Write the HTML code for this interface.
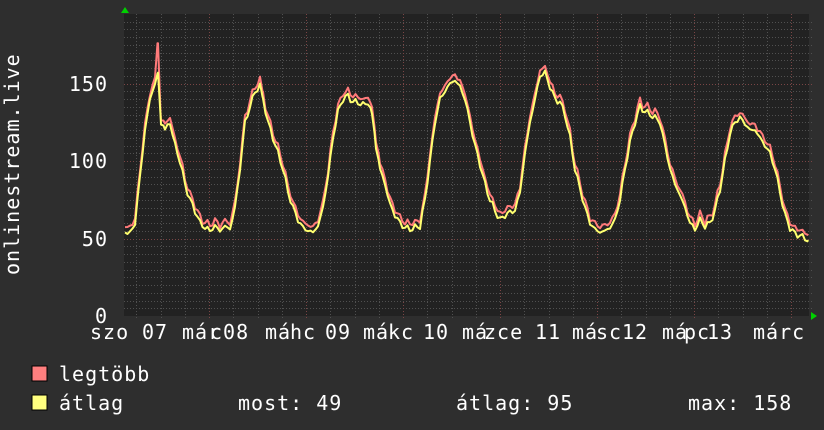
<!DOCTYPE html>
<html><head><meta charset="utf-8"><style>
html,body{margin:0;padding:0;background:#2e2e2e;width:824px;height:430px;overflow:hidden}
svg{display:block}
text{font-family:"DejaVu Sans Mono","Liberation Mono",monospace;fill:#fff;font-size:20px;letter-spacing:1px}
</style></head><body>
<svg id="s" width="824" height="430" xmlns="http://www.w3.org/2000/svg">
<rect x="0" y="0" width="824" height="430" fill="#2e2e2e"/>
<rect x="124" y="14" width="685" height="302" fill="#222"/>
<g id="grid"></g>
<polyline id="red" fill="none" stroke="#ff7a7a" stroke-width="2" stroke-linejoin="round"/>
<polyline id="yel" fill="none" stroke="#ffff70" stroke-width="2" stroke-linejoin="round"/>
<polygon points="121,13 125,7 129,13" fill="#00d000"/>
<polygon points="811,312 817,316 811,320" fill="#00d000"/>
<g text-anchor="end">
<text x="108" y="323">0</text>
<text x="108" y="246">50</text>
<text x="108" y="168">100</text>
<text x="108" y="91">150</text>
</g>
<text transform="translate(19,275) rotate(-90)">onlinestream.live</text>
<g>
<text x="90" y="339">szo</text>
<text x="142" y="339">07</text>
<text x="182" y="339">már</text>
<text x="210" y="339">c08</text>
<text x="265" y="339">má</text><text x="290" y="339">hc</text>
<text x="325" y="339">09</text>
<text x="363" y="339">má</text><text x="388" y="339">kc</text>
<text x="423" y="339">10</text>
<text x="462" y="339">má</text><text x="484" y="339">zce</text>
<text x="535" y="339">11</text>
<text x="572" y="339">má</text><text x="596" y="339">sc</text>
<text x="622" y="339">12</text>
<text x="662" y="339">má</text><text x="684" y="339">pc</text>
<text x="707" y="339">13</text>
<text x="753" y="339">márc</text>
</g>
<rect x="32" y="366" width="15" height="15" fill="#ff7f7f" stroke="#000" stroke-width="1"/>
<rect x="32" y="395" width="15" height="15" fill="#ffff7f" stroke="#000" stroke-width="1"/>
<text x="59" y="381">legtöbb</text>
<text x="59" y="410">átlag</text>
<text x="238" y="410">most: 49</text>
<text x="456" y="410">átlag: 95</text>
<text x="688" y="410">max: 158</text>
</svg>
<script>
var ns="http://www.w3.org/2000/svg",g=document.getElementById("grid");
function ln(x1,y1,x2,y2,c){var l=document.createElementNS(ns,"line");l.setAttribute("x1",x1);l.setAttribute("y1",y1);l.setAttribute("x2",x2);l.setAttribute("y2",y2);l.setAttribute("stroke",c);l.setAttribute("stroke-width","1");l.setAttribute("stroke-dasharray","1,2");g.appendChild(l);}
for(var v=5;v<=190;v+=5){var y=Math.round(316-v*1.55)+0.5;ln(124,y,812,y,v%50==0?"#7a4545":"#505050");}
for(var x=209-24.25*3;x<809;x+=24.25){var xx=Math.round(x)+0.5;var maj=Math.abs(((x-209)/97)-Math.round((x-209)/97))<0.01;ln(xx,14,xx,320,maj?"#7a4545":"#505050");}
var k=[[125,55],[130,53],[135,60],[140,90],[145,120],[150,140],[155,150],[158,157],[161,125],[165,120],[170,125],[175,110],[180,100],[185,85],[190,75],[195,68],[200,60],[205,57],[210,55],[215,58],[220,55],[225,58],[230,56],[235,70],[240,95],[245,125],[250,135],[255,145],[260,148],[263,140],[268,125],[273,115],[278,105],[283,95],[288,80],[293,70],[298,62],[303,57],[308,55],[313,54],[318,58],[323,70],[328,90],[333,115],[338,132],[343,140],[348,142],[353,138],[358,138],[363,136],[368,138],[372,130],[376,110],[380,95],[385,85],[390,72],[395,65],[400,60],[405,57],[410,56],[415,57],[420,58],[425,75],[430,100],[435,125],[440,140],[445,145],[450,150],[455,152],[460,148],[465,140],[470,125],[475,110],[480,98],[485,85],[490,75],[495,68],[500,62],[505,65],[510,67],[515,68],[520,80],[525,105],[530,125],[535,140],[540,155],[545,157],[550,148],[555,140],[560,138],[565,130],[570,115],[575,95],[580,82],[585,70],[590,60],[595,56],[600,54],[605,55],[610,57],[615,62],[620,75],[625,95],[630,112],[635,125],[640,135],[645,132],[650,130],[655,128],[660,125],[665,110],[670,95],[675,85],[680,78],[685,70],[690,60],[695,56],[700,62],[705,58],[710,60],[715,68],[720,82],[725,100],[730,118],[735,125],[740,128],[745,124],[750,120],[755,120],[760,115],[765,110],[770,105],[775,95],[780,80],[785,65],[790,57],[795,53],[800,52],[805,50],[808,49]];
var yp=[],rp=[];
for(var i=0;i<k.length-1;i++){var a=k[i],b=k[i+1];for(var x=a[0];x<b[0];x+=2.5){var t=(x-a[0])/(b[0]-a[0]);var v=a[1]+(b[1]-a[1])*t;var n=Math.sin(x*1.7)*1+Math.sin(x*0.73)*1.2;var yv=v+n;var rv=yv+2+Math.abs(Math.sin(x*0.9))*2.5;if(x>=157&&x<=159)rv=176;yp.push(x+","+(316-yv*1.55).toFixed(1));rp.push(x+","+(316-rv*1.55).toFixed(1));}}
yp.push("808,"+(316-49*1.55));rp.push("808,"+(316-53*1.55));
document.getElementById("yel").setAttribute("points",yp.join(" "));
document.getElementById("red").setAttribute("points",rp.join(" "));
</script>
</body></html>
